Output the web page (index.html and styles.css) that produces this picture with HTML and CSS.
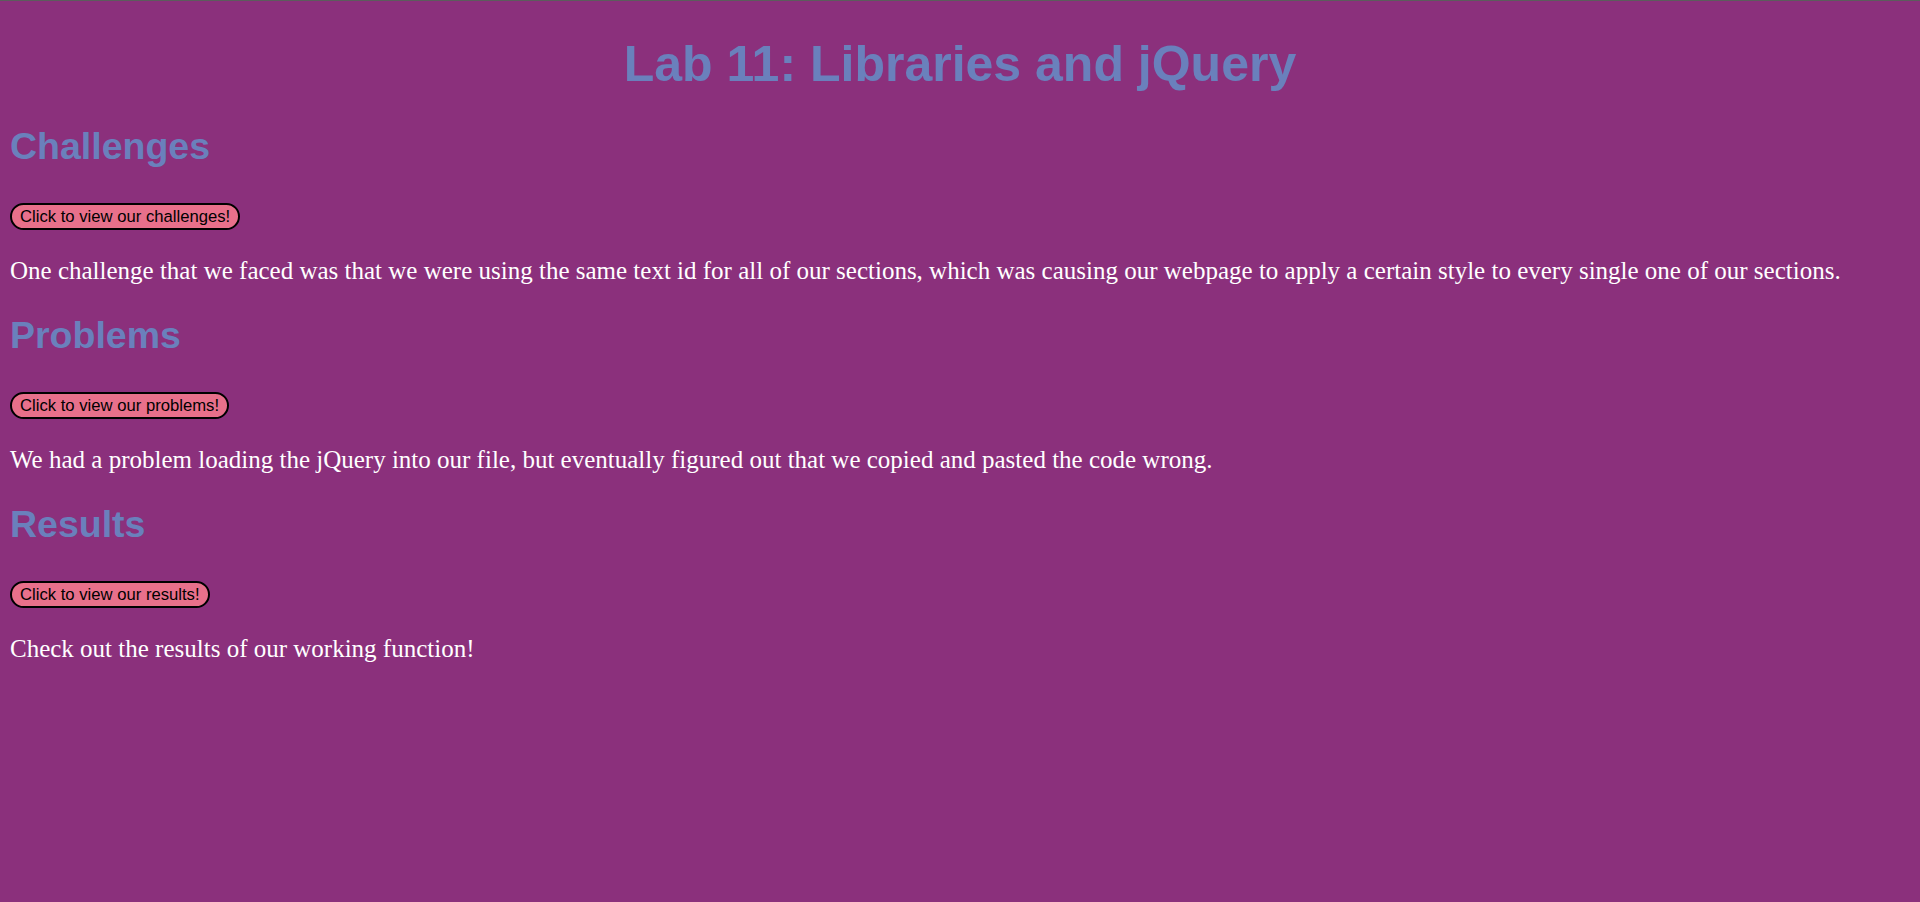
FILE: index.html
```html
<!DOCTYPE html>
<html lang="en">
<head>
<meta charset="utf-8">
<title>Lab 11: Libraries and jQuery</title>
<link rel="stylesheet" href="styles.css">
</head>
<body>
<div class="topline"></div>
<main class="page">
  <h1 class="title">Lab 11: Libraries and jQuery</h1>
  <section class="section">
    <h2 class="heading">Challenges</h2>
    <div class="btn-row"><button class="toggle">Click to view our challenges!</button></div>
    <p class="text">One challenge that we faced was that we were using the same text id for all of our sections, which was causing our webpage to apply a certain style to every single one of our sections.</p>
  </section>
  <section class="section">
    <h2 class="heading">Problems</h2>
    <div class="btn-row"><button class="toggle">Click to view our problems!</button></div>
    <p class="text">We had a problem loading the jQuery into our file, but eventually figured out that we copied and pasted the code wrong.</p>
  </section>
  <section class="section">
    <h2 class="heading">Results</h2>
    <div class="btn-row"><button class="toggle">Click to view our results!</button></div>
    <p class="text">Check out the results of our working function!</p>
  </section>
</main>
</body>
</html>
```

FILE: styles.css
```css
html, body {
  margin: 0;
  padding: 0;
  background: #8b307c;
  min-height: 100%;
}
body {
  min-height: 902px;
}
.topline {
  height: 1px;
  background: #5c5c5c;
}
.page {
  padding: 34px 10px 0 10px;
}
.title {
  margin: 0 0 32px 0;
  font-family: "Liberation Sans", Arial, sans-serif;
  font-weight: bold;
  font-size: 50px;
  line-height: 58px;
  text-align: center;
  color: #6a80bc;
}
.section {
  display: flex;
  flex-direction: column;
  align-items: flex-start;
  margin-bottom: 29px;
}
.heading {
  margin: 0 0 35px 0;
  font-family: "Liberation Sans", Arial, sans-serif;
  font-weight: bold;
  font-size: 37.5px;
  line-height: 43px;
  color: #6a80bc;
}
.btn-row {
  margin: 0 0 26px 0;
  display: flex;
}
.toggle {
  font-family: "Liberation Sans", Arial, sans-serif;
  font-size: 16.67px;
  line-height: 19px;
  padding: 2px 8px;
  border: 2px solid #000;
  border-radius: 14px;
  background: #e8708b;
  color: #000;
  cursor: pointer;
}
.text {
  margin: 0;
  font-family: "Liberation Serif", "Times New Roman", serif;
  font-size: 25px;
  line-height: 29px;
  color: #ffffff;
}
```
